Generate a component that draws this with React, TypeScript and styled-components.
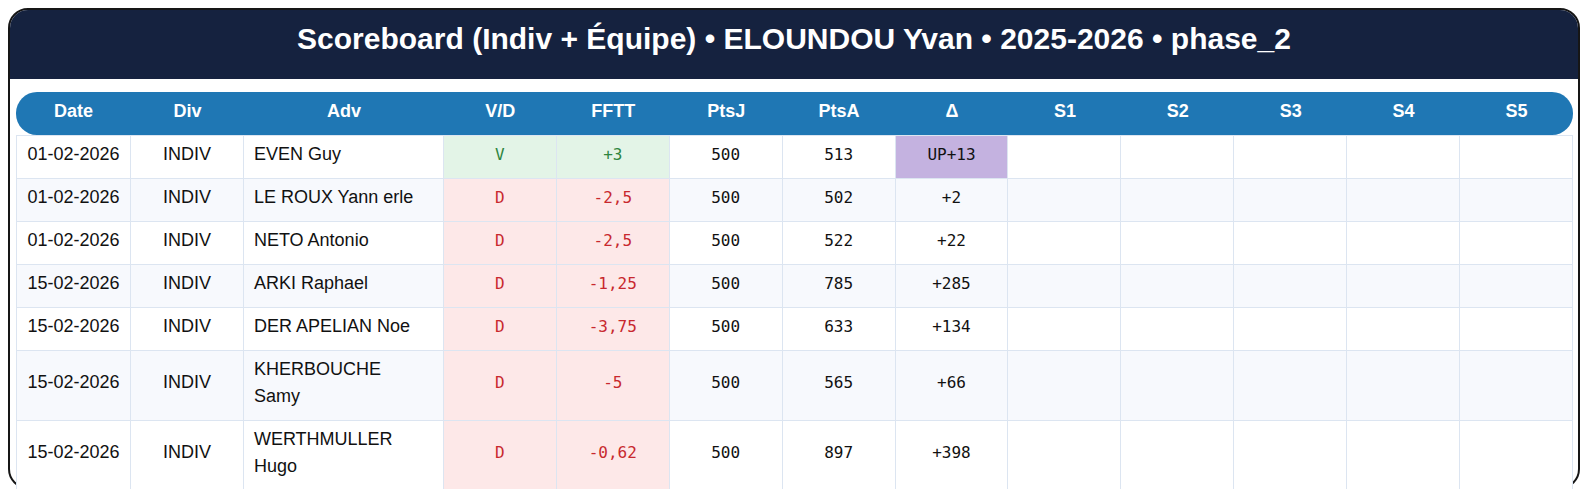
import React from "react";
import styled, { createGlobalStyle } from "styled-components";

const Global = createGlobalStyle`
  html, body { background: #ffffff; }
  body {
    margin: 8px;
    font-family: "Liberation Sans", Arial, sans-serif;
    color: #111111;
  }
  * { box-sizing: border-box; }
`;

const Card = styled.div`
  height: calc(100vh - 16px);
  border: 2px solid #161616;
  border-radius: 20px;
  background: #ffffff;
`;

const TitleBar = styled.h1`
  margin: 0;
  background: #15223f;
  color: #ffffff;
  border-radius: 18px 18px 0 0;
  font-size: 30px;
  font-weight: 700;
  line-height: 34px;
  text-align: center;
  padding: 12px 16px 23px;
`;

const Body = styled.div`
  padding: 13px 5px 0 6px;
`;

const Table = styled.table`
  width: 100%;
  table-layout: fixed;
  border-collapse: separate;
  border-spacing: 0;
  font-size: 18px;
  line-height: 27px;
`;

const Col = styled.col<{ $w?: number }>`
  width: ${(p) => (p.$w ? `${p.$w}px` : "auto")};
`;

const HeadCell = styled.th`
  background: #1f77b4;
  color: #ffffff;
  font-weight: 700;
  line-height: 27px;
  padding: 6px 8px 10px;
  text-align: center;
  &:first-child { border-radius: 21px 0 0 21px; }
  &:last-child { border-radius: 0 21px 21px 0; }
`;

const Row = styled.tr<{ $alt: boolean }>`
  background: ${(p) => (p.$alt ? "#f7f9fd" : "#ffffff")};
  &:first-child td { border-top: 1px solid #dce5f1; }
`;

type Tone = "win" | "loss" | "up" | undefined;

const toneBg: Record<string, string> = {
  win: "#e3f4e7",
  loss: "#fde8e8",
  up: "#c4b2e0",
};
const toneFg: Record<string, string> = {
  win: "#2e8540",
  loss: "#c8282e",
  up: "#111111",
};

const Cell = styled.td<{ $name?: boolean; $mono?: boolean; $tone?: Tone }>`
  padding: ${(p) => (p.$name ? "4.5px 14px 10.5px 10px" : "4.5px 6px 10.5px")};
  text-align: ${(p) => (p.$name ? "left" : "center")};
  vertical-align: middle;
  border-right: 1px solid #dce5f1;
  border-bottom: 1px solid #dce5f1;
  font-family: ${(p) => (p.$mono ? '"DejaVu Sans Mono", monospace' : "inherit")};
  font-size: ${(p) => (p.$mono ? "16px" : "inherit")};
  background: ${(p) => (p.$tone ? toneBg[p.$tone] : "transparent")};
  color: ${(p) => (p.$tone ? toneFg[p.$tone] : "#111111")};
  &:first-child { border-left: 1px solid #dce5f1; }
`;

type Match = {
  date: string;
  adv: string;
  res: "V" | "D";
  fftt: string;
  ptsj: string;
  ptsa: string;
  delta: string;
  up?: boolean;
};

const rows: Match[] = [
  { date: "01-02-2026", adv: "EVEN Guy", res: "V", fftt: "+3", ptsj: "500", ptsa: "513", delta: "UP+13", up: true },
  { date: "01-02-2026", adv: "LE ROUX Yann erle", res: "D", fftt: "-2,5", ptsj: "500", ptsa: "502", delta: "+2" },
  { date: "01-02-2026", adv: "NETO Antonio", res: "D", fftt: "-2,5", ptsj: "500", ptsa: "522", delta: "+22" },
  { date: "15-02-2026", adv: "ARKI Raphael", res: "D", fftt: "-1,25", ptsj: "500", ptsa: "785", delta: "+285" },
  { date: "15-02-2026", adv: "DER APELIAN Noe", res: "D", fftt: "-3,75", ptsj: "500", ptsa: "633", delta: "+134" },
  { date: "15-02-2026", adv: "KHERBOUCHE Samy", res: "D", fftt: "-5", ptsj: "500", ptsa: "565", delta: "+66" },
  { date: "15-02-2026", adv: "WERTHMULLER Hugo", res: "D", fftt: "-0,62", ptsj: "500", ptsa: "897", delta: "+398" },
];

const heads = ["Date", "Div", "Adv", "V/D", "FFTT", "PtsJ", "PtsA", "Δ", "S1", "S2", "S3", "S4", "S5"];
const colWidths: (number | undefined)[] = [115, undefined, 200];

export default function App() {
  return (
    <>
      <Global />
      <Card>
        <TitleBar>Scoreboard (Indiv + Équipe) • ELOUNDOU Yvan • 2025-2026 • phase_2</TitleBar>
        <Body>
          <Table>
            <colgroup>
              {heads.map((h, i) => (
                <Col key={h} $w={colWidths[i]} />
              ))}
            </colgroup>
            <thead>
              <tr>
                {heads.map((h) => (
                  <HeadCell key={h}>{h}</HeadCell>
                ))}
              </tr>
            </thead>
            <tbody>
              {rows.map((r, i) => {
                const tone: Tone = r.res === "V" ? "win" : "loss";
                return (
                  <Row key={i} $alt={i % 2 === 1}>
                    <Cell>{r.date}</Cell>
                    <Cell>INDIV</Cell>
                    <Cell $name>{r.adv}</Cell>
                    <Cell $mono $tone={tone}>{r.res}</Cell>
                    <Cell $mono $tone={tone}>{r.fftt}</Cell>
                    <Cell $mono>{r.ptsj}</Cell>
                    <Cell $mono>{r.ptsa}</Cell>
                    <Cell $mono $tone={r.up ? "up" : undefined}>{r.delta}</Cell>
                    <Cell />
                    <Cell />
                    <Cell />
                    <Cell />
                    <Cell />
                  </Row>
                );
              })}
            </tbody>
          </Table>
        </Body>
      </Card>
    </>
  );
}
